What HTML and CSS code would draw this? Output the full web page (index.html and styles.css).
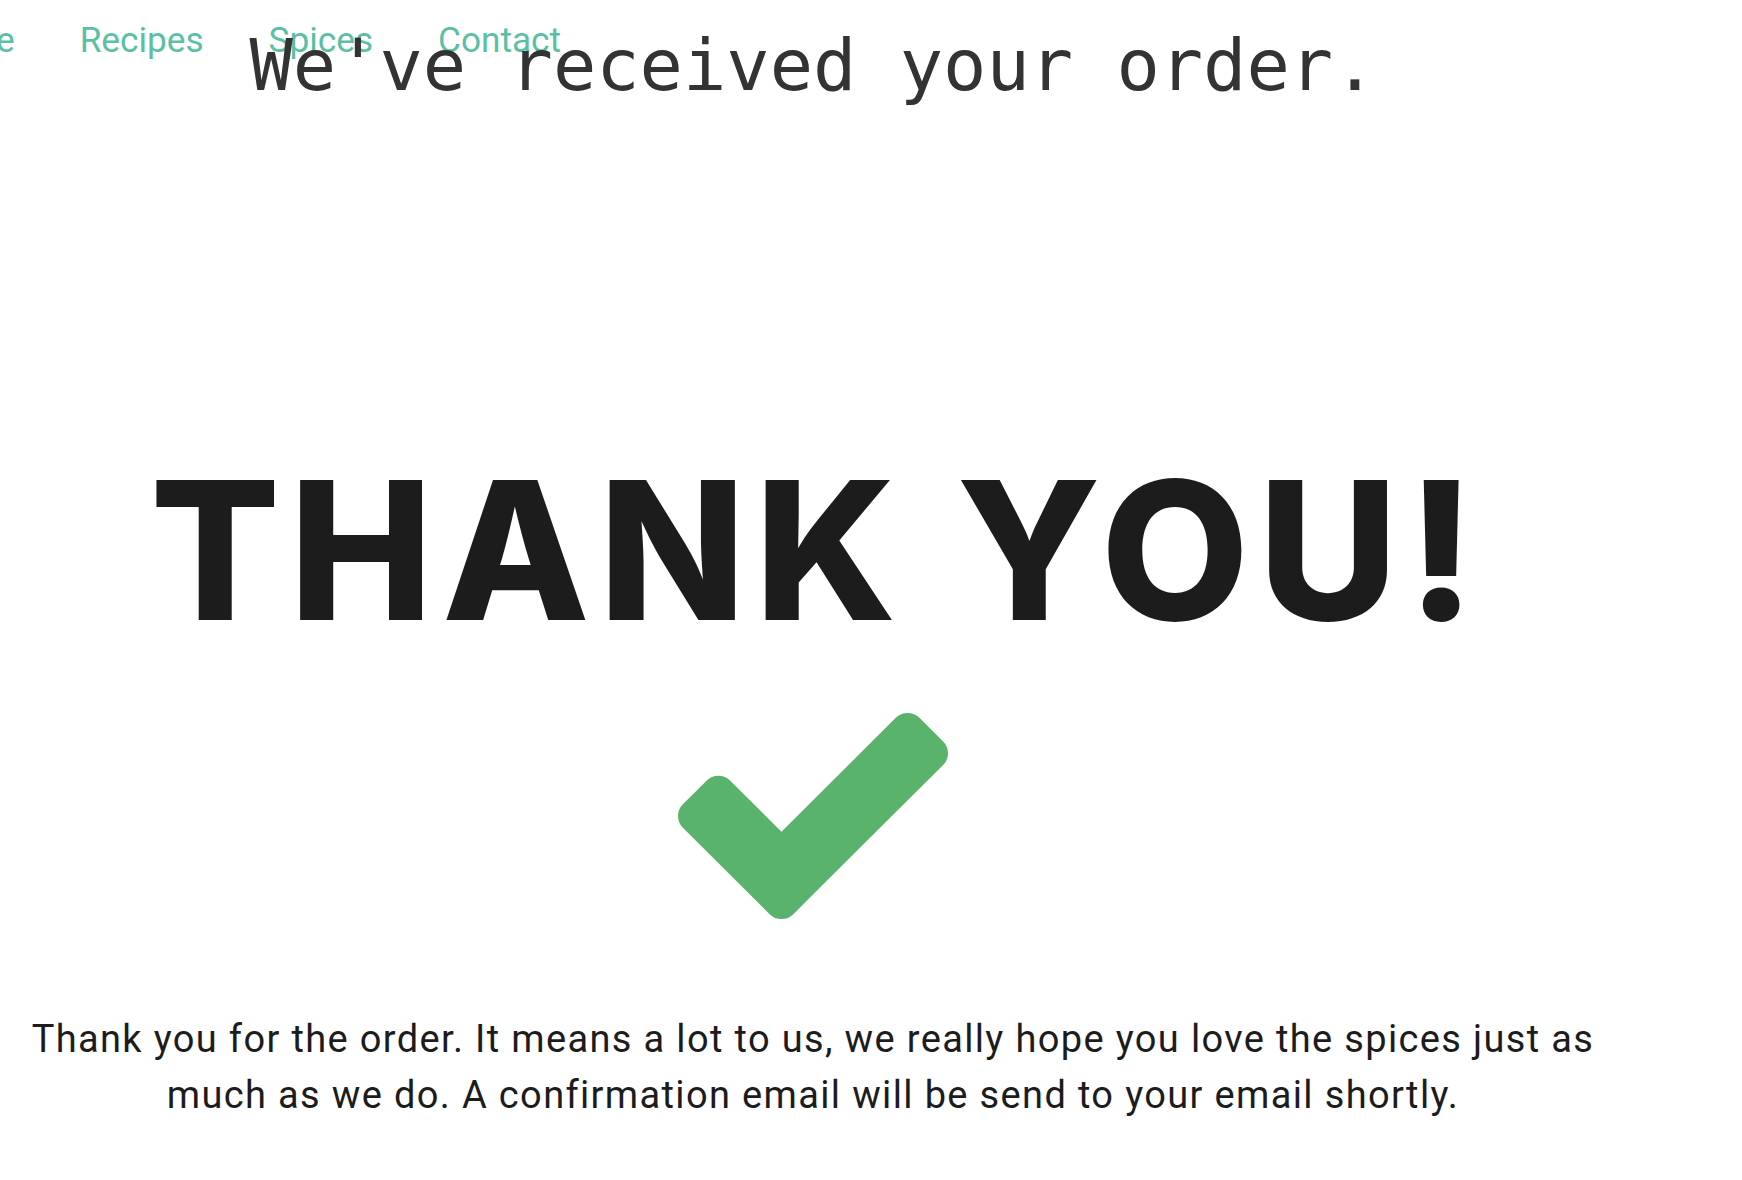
FILE: index.html
```html
<!DOCTYPE html>
<html lang="en">
<head>
<meta charset="utf-8">
<title>Thank you</title>
<link rel="stylesheet" href="styles.css">
</head>
<body>
<nav class="nav">
  <a class="nav-link" href="#">Home</a>
  <a class="nav-link" href="#">Recipes</a>
  <a class="nav-link" href="#">Spices</a>
  <a class="nav-link" href="#">Contact</a>
</nav>
<main class="page">
  <h1 class="received">We've received your order.</h1>
  <h2 class="thanks">THANK YOU!</h2>
  <svg class="check" viewBox="121 334 1550 1188" preserveAspectRatio="none" aria-hidden="true">
    <path fill="#5ab36d" d="M1671 566q0 40-28 68l-724 724-136 136q-28 28-68 28t-68-28l-136-136-362-362q-28-28-28-68t28-68l136-136q28-28 68-28t68 28l294 295 656-657q28-28 68-28t68 28l136 136q28 28 28 68z"/>
  </svg>
  <p class="message">Thank you for the order. It means a lot to us, we really hope you love the spices just as much as we do. A confirmation email will be send to your email shortly.</p>
</main>
</body>
</html>
```
FILE: styles.css
```css
html, body {
  margin: 0;
  padding: 0;
  background: #ffffff;
}

.nav {
  position: absolute;
  top: 20px;
  left: -80px;
  display: flex;
  gap: 65px;
  font-family: Roboto, "Liberation Sans", sans-serif;
  font-size: 35.2px;
  line-height: 40px;
}

.nav-link {
  color: #5bbfa5;
  text-decoration: none;
}

.page {
  position: relative;
  width: 1626px;
  text-align: center;
}

.received {
  margin: 29px 0 0;
  font-family: "DejaVu Sans Mono", monospace;
  font-weight: normal;
  font-size: 72px;
  line-height: 72px;
  color: #333333;
}

.thanks {
  margin: 353px 0 0;
  padding-left: 9px;
  font-family: Inter, "Liberation Sans", sans-serif;
  font-weight: 800;
  font-size: 192px;
  line-height: 192px;
  letter-spacing: 9px;
  color: #1c1c1c;
}

.check {
  display: block;
  width: 270px;
  height: 206px;
  margin: 67px auto 0;
}

.message {
  margin: 92px 0 0;
  font-family: Roboto, "Liberation Sans", sans-serif;
  font-size: 38px;
  line-height: 56px;
  letter-spacing: 1.35px;
  color: #1c1c1c;
}
```
